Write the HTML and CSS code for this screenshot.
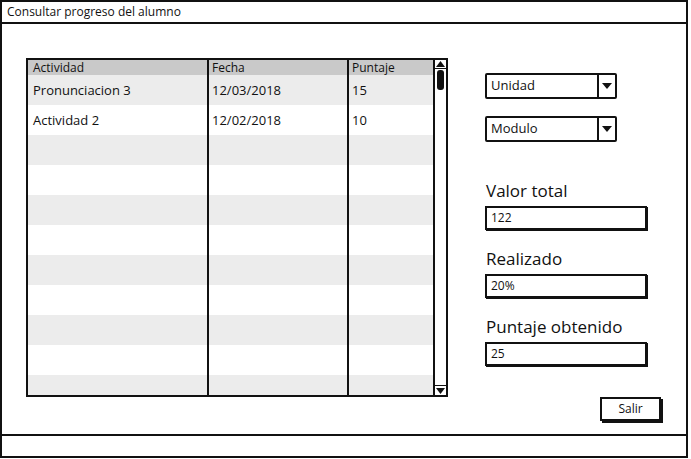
FILE: index.html
```html
<!DOCTYPE html>
<html lang="es">
<head>
<meta charset="utf-8">
<title>Consultar progreso del alumno</title>
<link rel="stylesheet" href="styles.css">
</head>
<body>
<div class="window">
  <div class="titlebar">Consultar progreso del alumno</div>
  <div class="main">
    <div class="grid">
      <div class="grid-body">
        <div class="row head"><div class="c c1">Actividad</div><div class="c c2">Fecha</div><div class="c c3">Puntaje</div></div>
        <div class="row odd"><div class="c c1">Pronunciacion 3</div><div class="c c2">12/03/2018</div><div class="c c3">15</div></div>
        <div class="row"><div class="c c1">Actividad 2</div><div class="c c2">12/02/2018</div><div class="c c3">10</div></div>
        <div class="row odd"><div class="c c1"></div><div class="c c2"></div><div class="c c3"></div></div>
        <div class="row"><div class="c c1"></div><div class="c c2"></div><div class="c c3"></div></div>
        <div class="row odd"><div class="c c1"></div><div class="c c2"></div><div class="c c3"></div></div>
        <div class="row"><div class="c c1"></div><div class="c c2"></div><div class="c c3"></div></div>
        <div class="row odd"><div class="c c1"></div><div class="c c2"></div><div class="c c3"></div></div>
        <div class="row"><div class="c c1"></div><div class="c c2"></div><div class="c c3"></div></div>
        <div class="row odd"><div class="c c1"></div><div class="c c2"></div><div class="c c3"></div></div>
        <div class="row"><div class="c c1"></div><div class="c c2"></div><div class="c c3"></div></div>
        <div class="row odd"><div class="c c1"></div><div class="c c2"></div><div class="c c3"></div></div>
      </div>
      <div class="scrollbar">
        <div class="sb-btn sb-up"><svg width="9" height="6" viewBox="0 0 9 6"><polygon points="0,6 9,6 4.5,0" fill="#111"/></svg></div>
        <div class="sb-track"><div class="sb-thumb"></div></div>
        <div class="sb-btn sb-down"><svg width="9" height="6" viewBox="0 0 9 6"><polygon points="0,0 9,0 4.5,6" fill="#111"/></svg></div>
      </div>
    </div>
    <div class="panel">
      <div class="select first"><span class="select-text">Unidad</span><span class="select-btn"><svg width="10" height="6" viewBox="0 0 10 6"><polygon points="0,0 10,0 5,6" fill="#111"/></svg></span></div>
      <div class="select second"><span class="select-text">Modulo</span><span class="select-btn"><svg width="10" height="6" viewBox="0 0 10 6"><polygon points="0,0 10,0 5,6" fill="#111"/></svg></span></div>
      <div class="label l1">Valor total</div>
      <div class="input">122</div>
      <div class="label l2">Realizado</div>
      <div class="input">20%</div>
      <div class="label l3">Puntaje obtenido</div>
      <div class="input">25</div>
      <div class="button">Salir</div>
    </div>
  </div>
  <div class="statusbar"></div>
</div>
</body>
</html>
```

FILE: styles.css
```css
* { box-sizing: border-box; }
html, body { margin: 0; padding: 0; background: #fff; }
body {
  font-family: "Open Sans", "DejaVu Sans", sans-serif;
  color: #111;
}
.window {
  width: 688px;
  height: 458px;
  border: 2px solid #111;
  display: flex;
  flex-direction: column;
  background: #fff;
}
.titlebar {
  height: 22px;
  border-bottom: 2px solid #111;
  font-size: 12px;
  line-height: 20px;
  padding-left: 5px;
}
.main {
  flex: 1;
  display: flex;
  align-items: flex-start;
  padding: 34px 0 0 24px;
}
.grid {
  width: 422px;
  height: 339px;
  border: 2px solid #111;
  display: flex;
}
.grid-body {
  flex: 1;
  overflow: hidden;
}
.row {
  display: flex;
  height: 30px;
  background: #fff;
}
.row.odd { background: #ececec; }
.row.head {
  height: 15px;
  background: #c9c9c9;
  font-size: 12px;
  line-height: 15px;
}
.c {
  font-size: 13px;
  line-height: 30px;
  white-space: nowrap;
  overflow: hidden;
}
.row.head .c { font-size: 12px; line-height: 15px; }
.c1 { width: 179px; padding-left: 5px; }
.c2 { width: 140px; border-left: 2px solid #111; padding-left: 3px; }
.c3 { width: 86px; border-left: 2px solid #111; padding-left: 3px; }
.scrollbar {
  width: 13px;
  border-left: 2px solid #111;
  display: flex;
  flex-direction: column;
  background: #fff;
}
.sb-btn {
  height: 10px;
  display: flex;
  align-items: center;
  justify-content: center;
}
.sb-up { border-bottom: 1px solid #111; height: 9px; }
.sb-down { border-top: 1px solid #111; }
.sb-track {
  flex: 1;
  padding: 1px 1px 0 2px;
}
.sb-thumb {
  width: 7px;
  height: 20px;
  background: #111;
  border-radius: 3px;
}
.panel {
  margin-left: 37px;
  display: flex;
  flex-direction: column;
  align-items: flex-start;
}
.select {
  width: 132px;
  height: 26px;
  border: 2px solid #111;
  border-radius: 2px;
  display: flex;
  font-size: 13px;
}
.select.first { margin-top: 15px; }
.select.second { margin-top: 17px; }
.select-text {
  flex: 1;
  padding-left: 4px;
  line-height: 21px;
}
.select-btn {
  width: 18px;
  border-left: 2px solid #111;
  display: flex;
  align-items: center;
  justify-content: center;
}
.label {
  font-size: 17px;
  line-height: 22px;
  height: 22px;
  padding-left: 1px;
}
.l1 { margin-top: 38px; }
.l2 { margin-top: 18px; }
.l3 { margin-top: 18px; }
.input {
  margin-top: 4px;
  width: 162px;
  height: 24px;
  border: 2px solid #111;
  box-shadow: 1px 1px 0 #111;
  font-size: 12px;
  line-height: 20px;
  padding-left: 4px;
}
.button {
  margin-top: 31px;
  margin-left: 115px;
  width: 61px;
  height: 24px;
  border: 2px solid #111;
  box-shadow: 2px 2px 0 #111;
  font-size: 12px;
  line-height: 20px;
  text-align: center;
}
.statusbar {
  height: 22px;
  border-top: 2px solid #111;
}
```
